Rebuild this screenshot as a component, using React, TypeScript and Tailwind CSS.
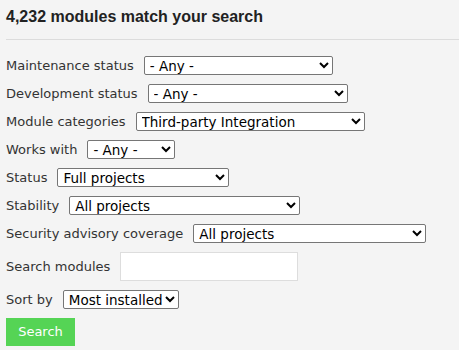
import React from "react";

const font = { fontFamily: '"DejaVu Sans", sans-serif' };

function Row({ label, width, value }: { label: string; width: number; value: string }) {
  return (
    <div className="flex h-[28px] items-center">
      <label className="mr-[10px] mt-[2px] text-[13px] text-[#333]">{label}</label>
      <select
        className="h-[19px] border border-[#767676] bg-white rounded-[2px] text-[13.5px] text-black pl-[1px]"
        style={{ width }}
        defaultValue={value}
      >
        <option>{value}</option>
      </select>
    </div>
  );
}

export default function App() {
  return (
    <div className="min-h-[350px] w-[459px] bg-[#f4f4f4] pl-[6px]" style={font}>
      <div className="pt-[7px] pb-[12px] border-b border-[#dcdcdc]">
        <h2
          className="text-[16px] font-bold leading-[20px] text-[#222]"
          style={{ fontFamily: '"Liberation Sans", Arial, sans-serif' }}
        >
          4,232 modules match your search
        </h2>
      </div>
      <div className="mt-[11px]">
        <Row label="Maintenance status" width={189} value="- Any -" />
        <Row label="Development status" width={200} value="- Any -" />
        <Row label="Module categories" width={229} value="Third-party Integration" />
        <Row label="Works with" width={88} value="- Any -" />
        <Row label="Status" width={172} value="Full projects" />
        <Row label="Stability" width={231} value="All projects" />
        <Row label="Security advisory coverage" width={233} value="All projects" />
        <div className="flex h-[38px] items-center">
          <label className="mr-[10px] mt-[2px] text-[13px] text-[#333]">Search modules</label>
          <input className="h-[29px] w-[178px] border border-[#dddddd] bg-white" type="text" />
        </div>
        <Row label="Sort by" width={116} value="Most installed" />
        <button className="mt-[5px] h-[28px] w-[69px] bg-[#55d455] text-[13px] text-white">
          Search
        </button>
      </div>
    </div>
  );
}
